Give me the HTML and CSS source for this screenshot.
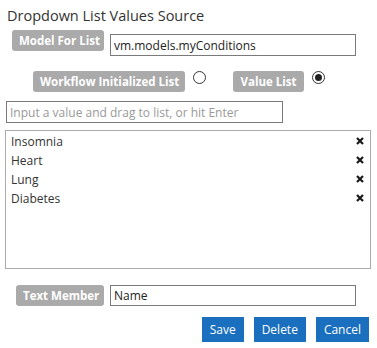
FILE: index.html
```html
<!DOCTYPE html>
<html lang="en">
<head>
  <meta charset="UTF-8">
  <title>Dropdown List Values Source</title>
  <link rel="stylesheet" href="styles.css">
</head>
<body>
  <div class="panel">
    <h3 class="title">Dropdown List Values Source</h3>

    <div class="row model-row">
      <span class="tag tag-model">Model For List</span>
      <input type="text" class="field field-wide" value="vm.models.myConditions">
    </div>

    <div class="row source-row">
      <span class="tag tag-workflow">Workflow Initialized List</span>
      <span class="radio"></span>
      <span class="tag tag-value">Value List</span>
      <span class="radio checked"></span>
    </div>

    <div class="row">
      <input type="text" class="field field-add" placeholder="Input a value and drag to list, or hit Enter">
    </div>

    <ul class="values">
      <li>Insomnia<span class="remove"><svg viewBox="0 0 8 8" width="8" height="8"><path d="M1 1L7 7M7 1L1 7" stroke="#1a1a1a" stroke-width="2.2"/></svg></span></li>
      <li>Heart<span class="remove"><svg viewBox="0 0 8 8" width="8" height="8"><path d="M1 1L7 7M7 1L1 7" stroke="#1a1a1a" stroke-width="2.2"/></svg></span></li>
      <li>Lung<span class="remove"><svg viewBox="0 0 8 8" width="8" height="8"><path d="M1 1L7 7M7 1L1 7" stroke="#1a1a1a" stroke-width="2.2"/></svg></span></li>
      <li>Diabetes<span class="remove"><svg viewBox="0 0 8 8" width="8" height="8"><path d="M1 1L7 7M7 1L1 7" stroke="#1a1a1a" stroke-width="2.2"/></svg></span></li>
    </ul>

    <div class="row member-row">
      <span class="tag tag-member">Text Member</span>
      <input type="text" class="field field-wide" value="Name">
    </div>

    <div class="actions">
      <button>Save</button>
      <button>Delete</button>
      <button>Cancel</button>
    </div>
  </div>
</body>
</html>
```

FILE: styles.css
```css
body {
  margin: 0;
  font-family: "Open Sans", Arial, sans-serif;
  color: #333;
  background: #fff;
}
.panel {
  padding: 6px 6px 0 5px;
}
.title {
  margin: 0 0 4px 2px;
  font-size: 14.5px;
  font-weight: normal;
  line-height: 20px;
}
.row {
  display: flex;
  align-items: flex-start;
}
.tag {
  display: inline-block;
  height: 21px;
  line-height: 21px;
  padding: 0 7px;
  background: #aaa;
  color: #fff;
  font-size: 11.5px;
  font-weight: bold;
  border-radius: 3px;
  box-sizing: border-box;
  white-space: nowrap;
  text-align: center;
}
.field {
  height: 22px;
  box-sizing: border-box;
  border: 1px solid #7a7a7a;
  padding: 0 3px;
  font-family: inherit;
  font-size: 12px;
  color: #222;
  outline: none;
}
.field::placeholder {
  color: #999;
}
.model-row .tag-model {
  margin-left: 7px;
  width: 92px;
}
.field-wide {
  margin: 4px 0 0 6px;
  width: 246px;
}
.source-row {
  margin: 15px 0 0 28px;
}
.tag-workflow {
  width: 152px;
}
.radio {
  width: 11px;
  height: 11px;
  border: 1px solid #333;
  border-radius: 50%;
  margin: 0 0 0 8px;
  position: relative;
}
.radio.checked::after {
  content: "";
  position: absolute;
  left: 2px;
  top: 2px;
  width: 7px;
  height: 7px;
  border-radius: 50%;
  background: #222;
}
.tag-value {
  margin-left: 27px;
  width: 71px;
}
.field-add {
  margin: 9px 0 0 1px;
  width: 277px;
}
.values {
  list-style: none;
  margin: 7px 0 0 0;
  padding: 0 0 0 5px;
  width: 366px;
  height: 139px;
  box-sizing: border-box;
  border: 1px solid #aaa;
  font-size: 12px;
}
.values li {
  display: flex;
  justify-content: space-between;
  align-items: center;
  height: 20px;
  margin-top: -1px;
}
.values li:first-child {
  margin-top: 0;
}
.remove {
  display: flex;
  margin-right: 6px;
}
.member-row {
  margin-top: 16px;
}
.member-row .tag-member {
  margin-left: 11px;
  width: 88px;
}
.member-row .field-wide {
  margin-top: 0;
  height: 21px;
}
.actions {
  display: flex;
  justify-content: flex-end;
  gap: 10px;
  margin: 11px 2px 0 0;
}
.actions button {
  height: 25px;
  padding: 0 8px;
  border: none;
  background: #1a6fbe;
  color: #fff;
  font-family: inherit;
  font-size: 12px;
  cursor: pointer;
}
```
